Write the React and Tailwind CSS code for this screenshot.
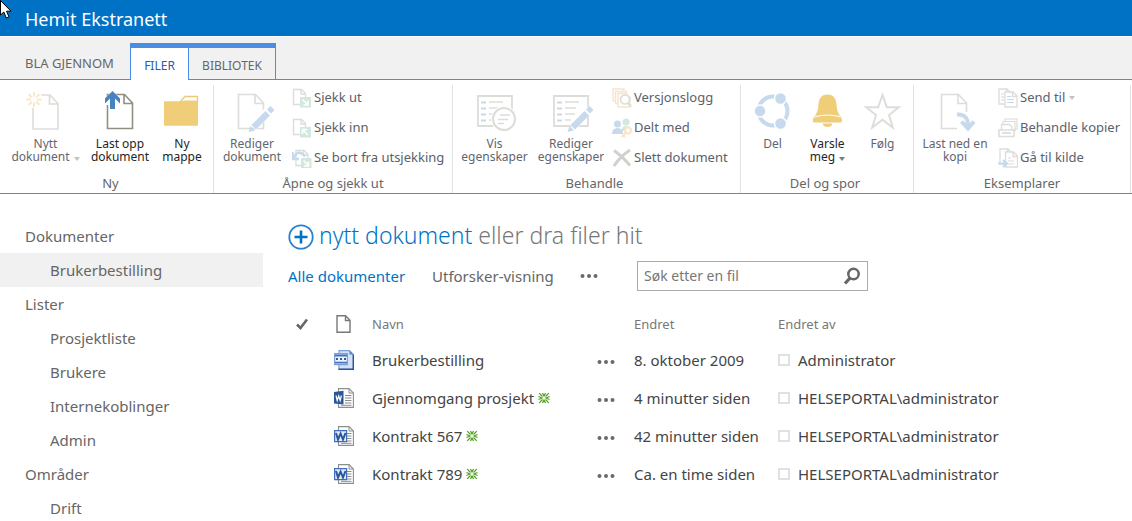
import { useState } from 'react'

const GREY = '#8f8f84'
const BLUE = '#4683c4'
const GREEN = '#6fb592'

const Page = ({ x = 0, y = 0, color = GREY }) => (
  <path
    transform={`translate(${x} ${y})`}
    d="M7.5 3.5h17l8 8.5v25.5h-25zM24 4v8.500h8.500"
    fill="#fff"
    stroke={color}
    strokeWidth="1.6"
  />
)

const Pencil = () => (
  <g>
    <path d="M38.500 17.500L21 36" stroke="#fff" strokeWidth="9" />
    <path d="M35 18.500l3.500-3.500 4 4-3.500 3.500zM33.500 20l4.500 4.500L24 38.500 19.500 34zM18.500 35l4.500 4.500-6.500 1.500z" fill={BLUE} />
  </g>
)

const ListSheet = () => (
  <g>
    <path d="M3 5h34v30H3z" fill="#fff" stroke={GREY} strokeWidth="1.8" />
    <path d="M6 11.500h5M6 17.500h5M6 23.500h5M6 29.500h5" stroke={BLUE} strokeWidth="2" />
    <path d="M14 11h14M14 17h11M14 23h10M14 29h6" stroke={GREY} strokeWidth="1.4" />
  </g>
)

const bigIcons = {
  newDoc: (
    <>
      <Page x={-0.5} y={0.5} />
      <circle cx="8" cy="8.500" r="8.500" fill="#fff" />
      <path
        d="M8 1v4.500M8 11.500V16M.5 8.500H5M11 8.500h4.500M2.700 3.200l3.200 3.200M10.200 10.700l3.200 3.200M13.300 3.200l-3.200 3.200M5.900 10.700l-3.200 3.200"
        stroke="#edb548"
        strokeWidth="2"
      />
    </>
  ),
  upload: (
    <>
      <Page />
      <path d="M12.500-1L21 9v5h-5v6H9v-6H4V9z" fill="#fff" />
      <path d="M12.500 0l7.500 7.500v5l-5-5V18h-5V7.500l-5 5v-5z" fill={BLUE} />
    </>
  ),
  folder: (
    <>
      <path d="M18 11l5-5.500h12.500v6z" fill="#fff" stroke="#ecc977" strokeWidth="1.300" />
      <path d="M2 11q0-.8.8-.8h17.200q1 0 1.500-.7H36v24.500q0 .8-.8.8H2.800q-.8 0-.8-.8z" fill="#efcd79" />
    </>
  ),
  editDoc: (
    <>
      <Page x={-1} />
      <Pencil />
    </>
  ),
  viewProps: (
    <>
      <ListSheet />
      <circle cx="29" cy="28" r="13" fill="#fff" />
      <circle cx="29" cy="28" r="11" fill="#fff" stroke={GREY} strokeWidth="2" />
      <path d="M25 24h10M23 28.500h10M23 32.500h6" stroke={GREY} strokeWidth="1.500" />
    </>
  ),
  editProps: (
    <>
      <ListSheet />
      <Pencil />
    </>
  ),
  share: (
    <>
      <circle cx="20" cy="20" r="14.500" fill="none" stroke={BLUE} strokeWidth="4" />
      <g fill={BLUE} stroke="#fff" strokeWidth="1.500">
        <circle cx="27.500" cy="7.500" r="6" />
        <circle cx="7" cy="20" r="6" />
        <circle cx="27.500" cy="32.500" r="6" />
      </g>
    </>
  ),
  bell: (
    <>
      <path
        d="M19.500 3.500c6.500 0 8.500 4.500 9 9.500.5 5.500 1 8.500 3.500 11.500h-25c2.500-3 3-6 3.500-11.500.5-5 2.500-9.500 9-9.500z"
        fill="#efcd79"
      />
      <path d="M6.500 25q13-4.500 26 0l1.500 3.500q.5 3-1.500 3h-26q-2 0-1.500-3z" fill="#efcd79" />
      <path d="M6.500 26q13-4 26 0" stroke="#fff" fill="none" />
      <path d="M14.500 32.500h10q-1 3.500-5 3.500t-5-3.500z" fill="#efcd79" />
    </>
  ),
  star: (
    <path
      d="M19.500 4l4.300 12.200h12L26 24l3.800 12.500-10.300-7.700-10.300 7.700L13 24l-9.800-7.800h12z"
      fill="none"
      stroke={GREY}
      strokeWidth="2"
    />
  ),
  download: (
    <>
      <Page x={-1} />
      <path d="M22 21h16v19H22z" fill="#fff" />
      <path d="M22 23.500q12-.5 11 13M26.500 30.500l6.500 7 6-7" fill="none" stroke={BLUE} strokeWidth="4" />
    </>
  ),
}

const SmallPage = ({ x = 0, y = 0 }) => (
  <path
    transform={`translate(${x} ${y})`}
    d="M1 1h8l4 4v11H1zM8.500 1v4.500H13"
    fill="#fff"
    stroke={GREY}
    strokeWidth="1.300"
  />
)

const smallIcons = {
  checkOut: (
    <>
      <SmallPage x={0.5} y={0.5} />
      <path d="M8 9h11v10.500H8z" fill={GREEN} />
      <path d="M10.500 11.500l5 5M16 12.500V17h-4.500" stroke="#fff" strokeWidth="1.700" fill="none" />
    </>
  ),
  checkIn: (
    <>
      <SmallPage x={0.5} y={0.5} />
      <path d="M8 9h11v10.500H8z" fill={GREEN} />
      <path d="M16 17l-5-5M10.500 16v-4.500H15" stroke="#fff" strokeWidth="1.700" fill="none" />
    </>
  ),
  discard: (
    <>
      <SmallPage x={3} y={1.5} />
      <path d="M9 10h10.500v10H9z" fill={GREEN} />
      <path d="M11.500 12.500l4.500 4.500M16.500 13.500V18H12" stroke="#fff" strokeWidth="1.600" fill="none" />
      <path d="M1.500 9.500q5-9 11.500-1M.5 4v7H7" stroke={BLUE} strokeWidth="2.400" fill="none" />
    </>
  ),
  versions: (
    <>
      <path d="M1 1h11v12H1z" fill="#fff" stroke="#efa650" strokeWidth="1.400" />
      <path d="M3.500 3.500h11v12h-11z" fill="#fff" stroke="#efa650" strokeWidth="1.400" />
      <path d="M6 5.500h8l4 4V19H6z" fill="#fff" stroke="#efa650" strokeWidth="1.400" />
      <circle cx="13" cy="11.500" r="4.500" fill="#fff" stroke={GREY} strokeWidth="1.700" />
      <path d="M16 15l3 3.500" stroke={GREY} strokeWidth="2" />
    </>
  ),
  sharedWith: (
    <>
      <circle cx="14" cy="4" r="3.500" fill={GREEN} />
      <path d="M9.500 13q0-5 4.500-5t4.500 5z" fill={GREEN} />
      <circle cx="5.500" cy="6" r="3.500" fill={BLUE} />
      <path d="M0 16q0-6 5.500-6t5.500 6z" fill={BLUE} />
      <circle cx="16" cy="12.500" r="3" fill="#fff" stroke="#efa650" strokeWidth="2" />
      <path d="M14 14.500L9.500 19M11 17l2 2" stroke="#efa650" strokeWidth="2" />
    </>
  ),
  remove: <path d="M2 2.500q8 5.500 16 15M18 2Q8 8.500 2 18" stroke="#66665c" strokeWidth="3" fill="none" />,
  sendTo: (
    <>
      <SmallPage />
      <path d="M3 6h3M3 9h3M3 12h3" stroke={BLUE} />
      <SmallPage x={6} y={3} />
      <path d="M9 8.500h4M9 11.500h7M9 14.500h7" stroke={BLUE} />
    </>
  ),
  copies: (
    <>
      <path d="M7 4V1h12v10h-3M5 6.500V3.500h12V13h-2" fill="none" stroke={GREY} strokeWidth="1.200" />
      <path d="M3.500 12V6.500h8l2.500 2.500v3" fill="#fff" stroke={GREY} strokeWidth="1.300" />
      <path d="M1 12h15v6.500H1z" fill="#fff" stroke={GREY} strokeWidth="1.600" />
      <path d="M4 15h9" stroke={GREY} strokeWidth="1.800" />
    </>
  ),
  source: (
    <>
      <SmallPage x={1} />
      <SmallPage x={6.5} y={3} />
      <path d="M10 10h3M10 13h6M10 16h6" stroke={GREY} />
      <path d="M0 15.500h8M5 12l4 3.500-4 3.500" stroke={BLUE} strokeWidth="2.200" fill="none" />
    </>
  ),
}

const Caret = () => (
  <span className="ml-1 inline-block border-x-[3px] border-t-4 border-x-transparent border-t-current opacity-70" />
)

const BigButton = ({ icon, label, width, enabled, caret }) => (
  <button type="button" className={`flex shrink-0 flex-col items-center pt-1.5 ${width}`}>
    <svg viewBox="0 0 40 40" className={`h-10 w-10 overflow-visible ${enabled ? '' : 'opacity-30'}`}>
      {bigIcons[icon]}
    </svg>
    <span className={`mt-1.5 whitespace-pre text-[12px] leading-[13px] ${enabled ? 'text-[#262626]' : 'text-[#5f6670]'}`}>
      {label}
      {caret && <span className={enabled ? 'text-[#444]' : 'text-[#aaa]'}><Caret /></span>}
    </span>
  </button>
)

const SmallButton = ({ icon, label, caret }) => (
  <button type="button" className="flex h-6 items-center gap-0.5 whitespace-nowrap text-[13px] text-[#5a616b]">
    <svg viewBox="0 0 20 20" className="h-5 w-5 opacity-30">{smallIcons[icon]}</svg>
    <span className="flex items-center">
      {label}
      {caret && <span className="flex text-[#aaa]"><Caret /></span>}
    </span>
  </button>
)

const groups = [
  {
    title: 'Ny',
    width: 'w-[214px] pl-2',
    big: [
      { icon: 'newDoc', label: 'Nytt\ndokument', width: 'w-[75px]', caret: true },
      { icon: 'upload', label: 'Last opp\ndokument', width: 'w-[74px]', enabled: true },
      { icon: 'folder', label: 'Ny\nmappe', width: 'w-[50px]', enabled: true },
    ],
  },
  {
    title: 'Åpne og sjekk ut',
    width: 'w-[239px]',
    big: [{ icon: 'editDoc', label: 'Rediger\ndokument', width: 'w-[76px]' }],
    small: [
      { icon: 'checkOut', label: 'Sjekk ut' },
      { icon: 'checkIn', label: 'Sjekk inn' },
      { icon: 'discard', label: 'Se bort fra utsjekking' },
    ],
  },
  {
    title: 'Behandle',
    width: 'w-[288px] pl-1 pr-2',
    big: [
      { icon: 'viewProps', label: 'Vis\negenskaper', width: 'w-[75px]' },
      { icon: 'editProps', label: 'Rediger\negenskaper', width: 'w-[78px]' },
    ],
    small: [
      { icon: 'versions', label: 'Versjonslogg' },
      { icon: 'sharedWith', label: 'Delt med' },
      { icon: 'remove', label: 'Slett dokument' },
    ],
  },
  {
    title: 'Del og spor',
    width: 'w-[173px] pl-1 pr-2',
    big: [
      { icon: 'share', label: 'Del', width: 'w-[55px]' },
      { icon: 'bell', label: 'Varsle\nmeg', width: 'w-[55px]', enabled: true, caret: true },
      { icon: 'star', label: 'Følg', width: 'w-[55px]' },
    ],
  },
  {
    title: 'Eksemplarer',
    width: 'w-[217px]',
    big: [{ icon: 'download', label: 'Last ned en\nkopi', width: 'w-[82px]' }],
    small: [
      { icon: 'sendTo', label: 'Send til', caret: true },
      { icon: 'copies', label: 'Behandle kopier' },
      { icon: 'source', label: 'Gå til kilde' },
    ],
  },
]

const navItems = [
  { label: 'Dokumenter' },
  { label: 'Brukerbestilling', child: true, active: true },
  { label: 'Lister' },
  { label: 'Prosjektliste', child: true },
  { label: 'Brukere', child: true },
  { label: 'Internekoblinger', child: true },
  { label: 'Admin', child: true },
  { label: 'Områder' },
  { label: 'Drift', child: true },
]

const files = [
  { name: 'Brukerbestilling', type: 'form', modified: '8. oktober 2009', by: 'Administrator' },
  { name: 'Gjennomgang prosjekt', type: 'docx', isNew: true, modified: '4 minutter siden', by: 'HELSEPORTAL\\administrator' },
  { name: 'Kontrakt 567', type: 'doc', isNew: true, modified: '42 minutter siden', by: 'HELSEPORTAL\\administrator' },
  { name: 'Kontrakt 789', type: 'doc', isNew: true, modified: 'Ca. en time siden', by: 'HELSEPORTAL\\administrator' },
]

const FileIcon = ({ type }) => {
  if (type === 'form') {
    return (
      <svg viewBox="0 0 20 20" className="h-5 w-5">
        <path d="M5 .6h10.500L19.400 4.500v14.900H5z" fill="#d3e2f8" stroke="#7d9fd6" strokeWidth="1.200" />
        <path d="M19.300 4.500v14.800H4.500" fill="none" stroke="#2c549f" strokeWidth="1.400" />
        <path d="M15.500.6v4h4z" fill="#5b84c8" />
        <path d="M.6 3.600h12.800v11H.6z" fill="#eef4fd" stroke="#7d9fd6" strokeWidth="1.200" />
        <path d="M1 5.500h12M1 12.700h12" stroke="#4571bd" strokeWidth="1.800" />
        <path d="M2 9h10" stroke="#33589b" strokeWidth="2" strokeDasharray="2 2" />
      </svg>
    )
  }
  return (
    <svg viewBox="0 0 20 20" className="h-5 w-5">
      <path d="M4.500.6h10.500l4.400 4.400v14.400H4.500z" fill="#fff" stroke="#8e8e8e" strokeWidth="1.100" />
      <path d="M15 .8V5h4.400" fill="none" stroke="#8e8e8e" />
      <path d="M11 7.500h6.500M11 10h6.500M11 12.500h6.500M11 15h6.500M7 17.300h10.500" stroke="#8c8c8c" />
      {type === 'docx' ? (
        <>
          <path d="M0 4l9.500-1.200v13.700L0 15.500z" fill="#2b579a" />
          <path d="M2 7.500l1.200 5 1.500-4.500 1.500 4.500 1.200-5" fill="none" stroke="#fff" strokeWidth="1.200" />
        </>
      ) : (
        <>
          <path d="M.6 4.600h12v11H.6z" fill="#dfeafa" stroke="#3f6fb5" strokeWidth="1.200" />
          <path d="M2 7l2 6.500L6.600 7.500 9 13.500 11.500 7" fill="none" stroke="#2b579a" strokeWidth="2" />
        </>
      )}
    </svg>
  )
}

const NewMark = () => (
  <svg viewBox="0 0 12 12" className="h-3 w-3" role="img" aria-label="Ny">
    <path
      d="M4.500 1L6 4l1.500-3M4.500 11L6 8l1.500 3M.5 4.500L4 6 .5 7.500M11.500 4.500L8 6l3.500 1.500M1.200 1.200l3.300 3.300M10.800 1.200L7.500 4.500M1.200 10.800l3.300-3.300M10.800 10.800L7.500 7.500"
      fill="none"
      stroke="#4f9d1d"
      strokeWidth="1.200"
    />
  </svg>
)

const Dots = () => (
  <svg viewBox="0 0 18 4" className="h-1 w-[18px]" fill="#6a6a6a">
    <circle cx="2.500" cy="2" r="2" />
    <circle cx="9" cy="2" r="2" />
    <circle cx="15.500" cy="2" r="2" />
  </svg>
)

export default function App() {
  const [query, setQuery] = useState('')
  const [selected, setSelected] = useState([])

  const toggle = (name) =>
    setSelected(selected.includes(name) ? selected.filter((n) => n !== name) : [...selected, name])

  const visible = files.filter((f) => f.name.toLowerCase().includes(query.toLowerCase()))

  return (
    <div className="relative h-screen overflow-hidden bg-white font-['Noto_Sans','Open_Sans',sans-serif] text-[#444]">
      <svg viewBox="0 0 12 20" className="absolute left-0 top-0 h-5 w-3">
        <path d="M.5.500v14.500l3.300-3 2.500 6 2.700-1.200-2.500-5.600h4.500z" fill="#fff" stroke="#000" />
      </svg>

      <header className="flex h-9 items-center bg-[#0072c6] px-[25px] pt-0.5">
        <h1 className="text-lg text-white">Hemit Ekstranett</h1>
      </header>

      {/* Ribbon tabs */}
      <nav className="mt-px flex h-[43px] items-end border-b border-[#4b8de0] bg-[#f1f1f1] text-[13px] text-[#666]">
        <button type="button" className="h-[37px] w-[130px] pl-[25px] pt-1.5 text-left">BLA GJENNOM</button>
        <div className="-mb-px flex h-[37px] border-x border-t-[5px] border-[#4b8de0] text-[12px]">
          <button type="button" className="w-[58px] border-r border-[#4b8de0] bg-white pt-1 text-[#2a5caa]">FILER</button>
          <button type="button" className="w-[86px] border-b border-[#4b8de0] pt-1">BIBLIOTEK</button>
        </div>
      </nav>

      {/* Ribbon */}
      <div className="flex border-b border-[#4b8de0] pt-[5px]">
        {groups.map((group) => (
          <section key={group.title} className={`flex h-[108px] shrink-0 flex-col border-r border-[#e1e1e1] ${group.width}`}>
            <div className="flex flex-1">
              {group.big.map((item) => <BigButton key={item.icon} {...item} />)}
              {group.small && (
                <div className="ml-0.5 mt-px flex flex-col gap-1.5">
                  {group.small.map((item) => <SmallButton key={item.icon} {...item} />)}
                </div>
              )}
            </div>
            <h2 className="pb-0.5 text-center text-[13px] leading-4 text-[#666]">{group.title}</h2>
          </section>
        ))}
      </div>

      <div className="flex pt-[25px]">
        <nav className="w-[263px] shrink-0 text-[15px] text-[#666]">
          {navItems.map((item) => (
            <a
              key={item.label}
              href="#"
              className={`flex h-[34px] items-center ${item.child ? 'pl-[50px]' : 'pl-[25px]'} ${item.active ? 'bg-[#f1f1f1]' : ''}`}
            >
              {item.label}
            </a>
          ))}
        </nav>

        <main className="min-w-0 flex-1 pl-[25px]">
          <div className="flex h-8 items-center gap-[5px] text-[23px] font-light text-[#777]">
            <svg viewBox="0 0 26 26" className="mt-1 h-[26px] w-[26px]" fill="none" stroke="#2a80cd">
              <circle cx="13" cy="13" r="11.700" strokeWidth="1.800" />
              <path d="M13 6.500v13M6.500 13h13" strokeWidth="2.600" stroke="#0072c6" />
            </svg>
            <p><a href="#" className="text-[#0072c6]">nytt dokument</a> eller dra filer hit</p>
          </div>

          <div className="mt-2.5 flex h-[30px] items-center text-[15px] text-[#666]">
            <a href="#" className="w-36 text-[#0072c6]">Alle dokumenter</a>
            <a href="#" className="w-[148px]">Utforsker-visning</a>
            <button type="button" aria-label="Flere visninger" className="w-[57px]"><Dots /></button>
            <div className="flex h-[30px] w-[231px] items-center border border-[#ababab] px-1.5">
              <input
                type="text"
                aria-label="Søk etter en fil"
                placeholder="Søk etter en fil"
                value={query}
                onChange={(e) => setQuery(e.target.value)}
                className="min-w-0 flex-1 text-sm placeholder-[#777] outline-none"
              />
              <button type="button" aria-label="Søk">
                <svg viewBox="0 0 18 18" className="h-[18px] w-[18px]" fill="none" stroke="#666">
                  <circle cx="10.500" cy="7" r="5.200" strokeWidth="2.500" />
                  <path d="M7 11l-5 5.500" strokeWidth="3.200" />
                </svg>
              </button>
            </div>
          </div>

          <table className="mt-4 w-full table-fixed text-left text-[15px]">
            <colgroup>
              <col className="w-[46px]" />
              <col className="w-[38px]" />
              <col className="w-[225px]" />
              <col className="w-[37px]" />
              <col className="w-36" />
              <col />
            </colgroup>
            <thead>
              <tr className="h-[34px] text-[13px] text-[#777]">
                <th className="pl-2">
                  <svg viewBox="0 0 12 12" className="h-3 w-3" fill="none" stroke="#666" strokeWidth="2.600">
                    <path d="M1 6.500l3.500 3.500L11 1.500" />
                  </svg>
                </th>
                <th className="pl-0.5">
                  <svg viewBox="0 0 16 18" className="h-[18px] w-4" fill="none" stroke="#777" strokeWidth="1.400">
                    <path d="M1 .8h8.500l4.500 4.500v11.900H1zM9.500 1v4.500h4.500" />
                  </svg>
                </th>
                <th className="pt-0.5 font-normal">Navn</th>
                <th aria-label="Meny" />
                <th className="pt-0.5 font-normal">Endret</th>
                <th className="pt-0.5 font-normal">Endret av</th>
              </tr>
            </thead>
            <tbody>
              {visible.map((file) => (
                <tr key={file.name} className="h-[38px]">
                  <td />
                  <td><FileIcon type={file.type} /></td>
                  <td>
                    <div className="flex items-center gap-1">
                      <a href="#">{file.name}</a>
                      {file.isNew && <NewMark />}
                    </div>
                  </td>
                  <td><button type="button" aria-label={`Meny for ${file.name}`} className="flex pt-1"><Dots /></button></td>
                  <td>{file.modified}</td>
                  <td>
                    <label className="flex items-center gap-2">
                      <input
                        type="checkbox"
                        checked={selected.includes(file.name)}
                        onChange={() => toggle(file.name)}
                        className="h-3 w-3 appearance-none border-2 border-[#e1e1e1] checked:bg-[#0072c6]"
                      />
                      {file.by}
                    </label>
                  </td>
                </tr>
              ))}
            </tbody>
          </table>
        </main>
      </div>
    </div>
  )
}
